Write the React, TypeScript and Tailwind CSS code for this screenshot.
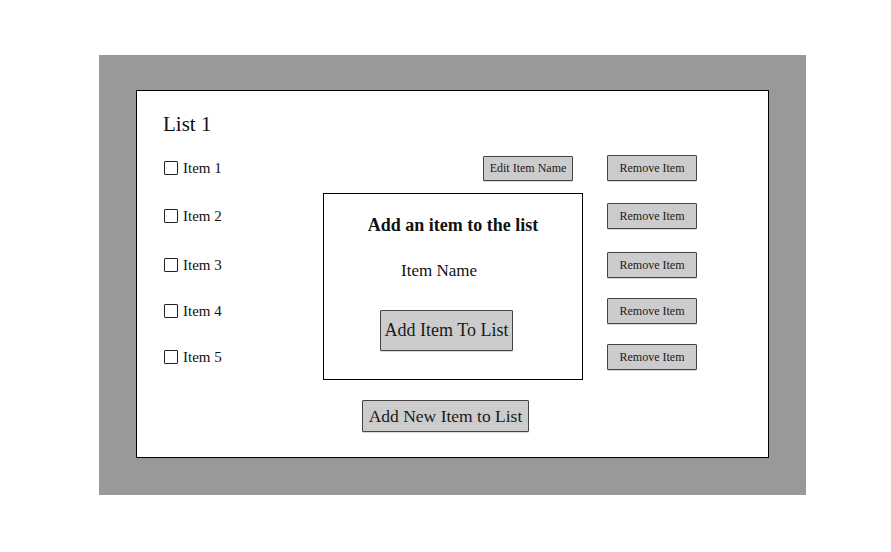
const items = [
  { label: "Item 1", gap: "mt-[18px]" },
  { label: "Item 2", gap: "mt-[22px]" },
  { label: "Item 3", gap: "mt-[23px]" },
  { label: "Item 4", gap: "mt-[20px]" },
  { label: "Item 5", gap: "mt-[20px]" },
];

const btn =
  "flex items-center justify-center bg-[#cccccc] border border-[#444444] rounded-[1px] text-[#1a1a1a] shadow-[0_1px_0_rgba(0,0,0,0.15)]";

export default function App() {
  return (
    <div
      className="w-[891px] h-[552px] bg-white pt-[55px] pl-[99px]"
      style={{ fontFamily: '"Liberation Serif", "Times New Roman", serif' }}
    >
      <div className="w-[707px] h-[440px] bg-[#999999] pt-[35px] pl-[37px]">
        <div className="relative w-[633px] h-[368px] bg-white border border-black pt-[20px] pl-[26px]">
          <h1 className="text-[21px] leading-[26px] text-[#111111]">List 1</h1>

          {items.map((it, i) => (
            <div
              key={it.label}
              className={`${it.gap} h-[26px] grid grid-cols-[286px_90px_90px] gap-x-[34px] items-center`}
            >
              <div className="flex items-center gap-[5px] ml-[1px]">
                <span className="w-[14px] h-[14px] border border-[#222222] rounded-[1px] bg-white" />
                <span className="text-[15px] leading-[18px] text-[#111111]">{it.label}</span>
              </div>
              {i === 0 ? (
                <button className={`${btn} h-[25px] text-[12px]`}>Edit Item Name</button>
              ) : (
                <span />
              )}
              <button className={`${btn} h-[26px] text-[12px]`}>Remove Item</button>
            </div>
          ))}

          <button
            className={`${btn} mt-[30px] ml-[199px] w-[167px] h-[32px] text-[17.5px]`}
          >
            Add New Item to List
          </button>

          <div className="absolute left-[186px] top-[102px] w-[260px] h-[187px] bg-white border border-black pt-[20px]">
            <h2 className="text-center font-bold text-[18px] leading-[22px] text-[#111111]">
              Add an item to the list
            </h2>
            <p className="mt-[25px] ml-[77px] text-[17px] leading-[20px] text-[#111111]">
              Item Name
            </p>
            <button
              className={`${btn} mt-[29px] ml-[56px] w-[133px] h-[41px] text-[18px]`}
            >
              Add Item To List
            </button>
          </div>
        </div>
      </div>
    </div>
  );
}
